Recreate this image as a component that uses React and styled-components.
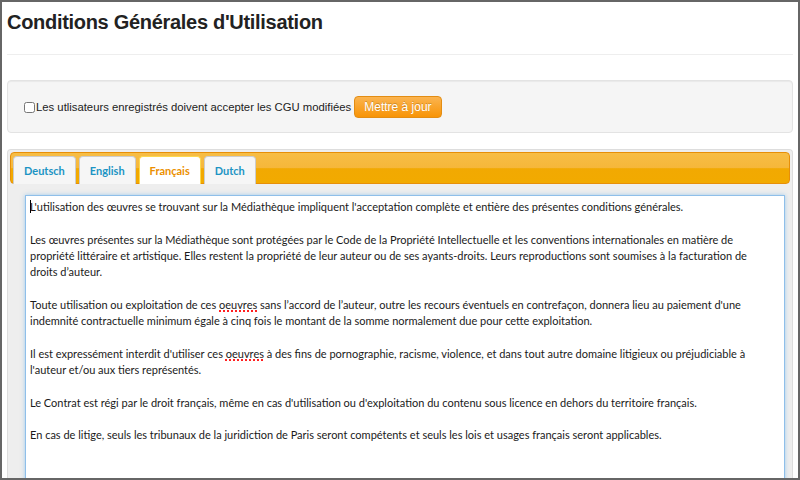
import styled, { createGlobalStyle } from "styled-components";

const GlobalStyle = createGlobalStyle`
  html, body {
    margin: 0;
    padding: 0;
    background: #fff;
  }
  * {
    box-sizing: border-box;
  }
`;

const paragraphs = [
  [
    "L'utilisation des œuvres se trouvant sur la Médiathèque impliquent l'acceptation complète et entière des présentes conditions générales.",
  ],
  [
    "Les œuvres présentes sur la Médiathèque sont protégées par le Code de la Propriété Intellectuelle et les conventions internationales en matière de",
    "propriété littéraire et artistique. Elles restent la propriété de leur auteur ou de ses ayants-droits. Leurs reproductions sont soumises à la facturation de",
    "droits d’auteur.",
  ],
  [
    "Toute utilisation ou exploitation de ces |oeuvres| sans l’accord de l’auteur, outre les recours éventuels en contrefaçon, donnera lieu au paiement d'une",
    "indemnité contractuelle minimum égale à cinq fois le montant de la somme normalement due pour cette exploitation.",
  ],
  [
    "Il est expressément interdit d'utiliser ces |oeuvres| à des fins de pornographie, racisme, violence, et dans tout autre domaine litigieux ou préjudiciable à",
    "l'auteur et/ou aux tiers représentés.",
  ],
  [
    "Le Contrat est régi par le droit français, même en cas d'utilisation ou d'exploitation du contenu sous licence en dehors du territoire français.",
  ],
  [
    "En cas de litige, seuls les tribunaux de la juridiction de Paris seront compétents et seuls les lois et usages français seront applicables.",
  ],
];

const tabs = ["Deutsch", "English", "Français", "Dutch"];

export default function App() {
  return (
    <>
      <GlobalStyle />
      <Frame>
        <Title>Conditions Générales d'Utilisation</Title>
        <Rule />
        <Well>
          <Check type="checkbox" />
          <Label>Les utlisateurs enregistrés doivent accepter les CGU modifiées</Label>
          <UpdateButton>Mettre à jour</UpdateButton>
        </Well>
        <TabsBox>
          <TabBar>
            {tabs.map((t) => (
              <Tab key={t} active={t === "Français"}>
                {t}
              </Tab>
            ))}
          </TabBar>
          <Panel>
            <Editor>
              {paragraphs.map((p, pi) => (
                <Para key={pi}>
                  {p.map((line, li) => (
                    <Line key={li}>
                      {pi === 0 && li === 0 && <Caret />}
                      {line.split("|").map((part, k) =>
                        k % 2 === 1 ? <Misspelled key={k}>{part}</Misspelled> : part
                      )}
                    </Line>
                  ))}
                </Para>
              ))}
            </Editor>
          </Panel>
        </TabsBox>
      </Frame>
    </>
  );
}

const Frame = styled.div`
  width: 800px;
  height: 480px;
  border: 2px solid #666;
  padding: 0 5px;
  overflow: hidden;
  font-family: "Liberation Sans", Arial, sans-serif;
  color: #333;
`;

const Title = styled.h1`
  margin: 8px 0 0;
  font-size: 20px;
  line-height: 24px;
  letter-spacing: -0.3px;
  font-weight: bold;
  color: #222;
`;

const Rule = styled.div`
  margin-top: 20px;
  height: 1px;
  background: #eee;
`;

const Well = styled.div`
  margin-top: 25px;
  height: 53px;
  display: flex;
  align-items: center;
  padding: 0 16px;
  background: #f5f5f5;
  border: 1px solid #e3e3e3;
  border-radius: 4px;
  box-shadow: inset 0 1px 1px rgba(0, 0, 0, 0.05);
`;

const Check = styled.input`
  margin: 2px 1px 0 0;
  width: 11px;
  height: 11px;
`;

const Label = styled.span`
  font-size: 11.3px;
  color: #222;
`;

const UpdateButton = styled.button`
  margin-left: 3px;
  height: 22px;
  padding: 0 9px;
  font-family: "Liberation Sans", Arial, sans-serif;
  font-size: 12px;
  color: #fff;
  text-shadow: 0 -1px 0 rgba(0, 0, 0, 0.2);
  background: linear-gradient(#fbb450, #f89406);
  border: 1px solid #e38d13;
  border-radius: 4px;
`;

const TabsBox = styled.div`
  margin-top: 16px;
  border: 1px solid #ddd;
  border-bottom: none;
  border-radius: 4px 4px 0 0;
  padding: 2px 2px 0;
  background: #eee;
  height: 340px;
`;

const TabBar = styled.div`
  height: 32px;
  display: flex;
  align-items: flex-start;
  gap: 3px;
  padding: 3px 2px 0;
  border: 1px solid #e78f08;
  border-radius: 4px;
  background: linear-gradient(#f7bd45 0%, #f6b73a 50%, #f2a902 52%, #f2aa00 100%);
`;

const Tab = styled.div`
  height: 28px;
  display: flex;
  align-items: center;
  padding: 0 10px;
  font-family: Lato, "Liberation Sans", sans-serif;
  font-size: 11px;
  font-weight: bold;
  color: ${(p) => (p.active ? "#eb8f00" : "#1c94c4")};
  background: ${(p) => (p.active ? "#fff" : "#f6f6f6")};
  border: 1px solid ${(p) => (p.active ? "#fbd850" : "#ccc")};
  border-bottom: none;
  border-radius: 4px 4px 0 0;
`;

const Panel = styled.div`
  padding: 11px 5px 0 15px;
`;

const Editor = styled.div`
  height: 300px;
  padding: 3px 4px;
  background: #fff;
  border: 1px solid #8fbfe9;
  box-shadow: 0 0 4px rgba(82, 168, 236, 0.5);
  font-family: Lato, "Liberation Sans", sans-serif;
  font-size: 11px;
  line-height: 16.3px;
  color: #1a1a1a;
`;

const Para = styled.div`
  margin-bottom: 16.3px;
`;

const Line = styled.div`
  white-space: nowrap;
`;

const Caret = styled.span`
  display: inline-block;
  width: 1px;
  height: 13px;
  margin-right: -1px;
  vertical-align: -2px;
  background: #000;
`;

const Misspelled = styled.span`
  text-decoration: underline dotted #ff2020;
  text-decoration-thickness: 1.5px;
  text-underline-offset: 2px;
`;
